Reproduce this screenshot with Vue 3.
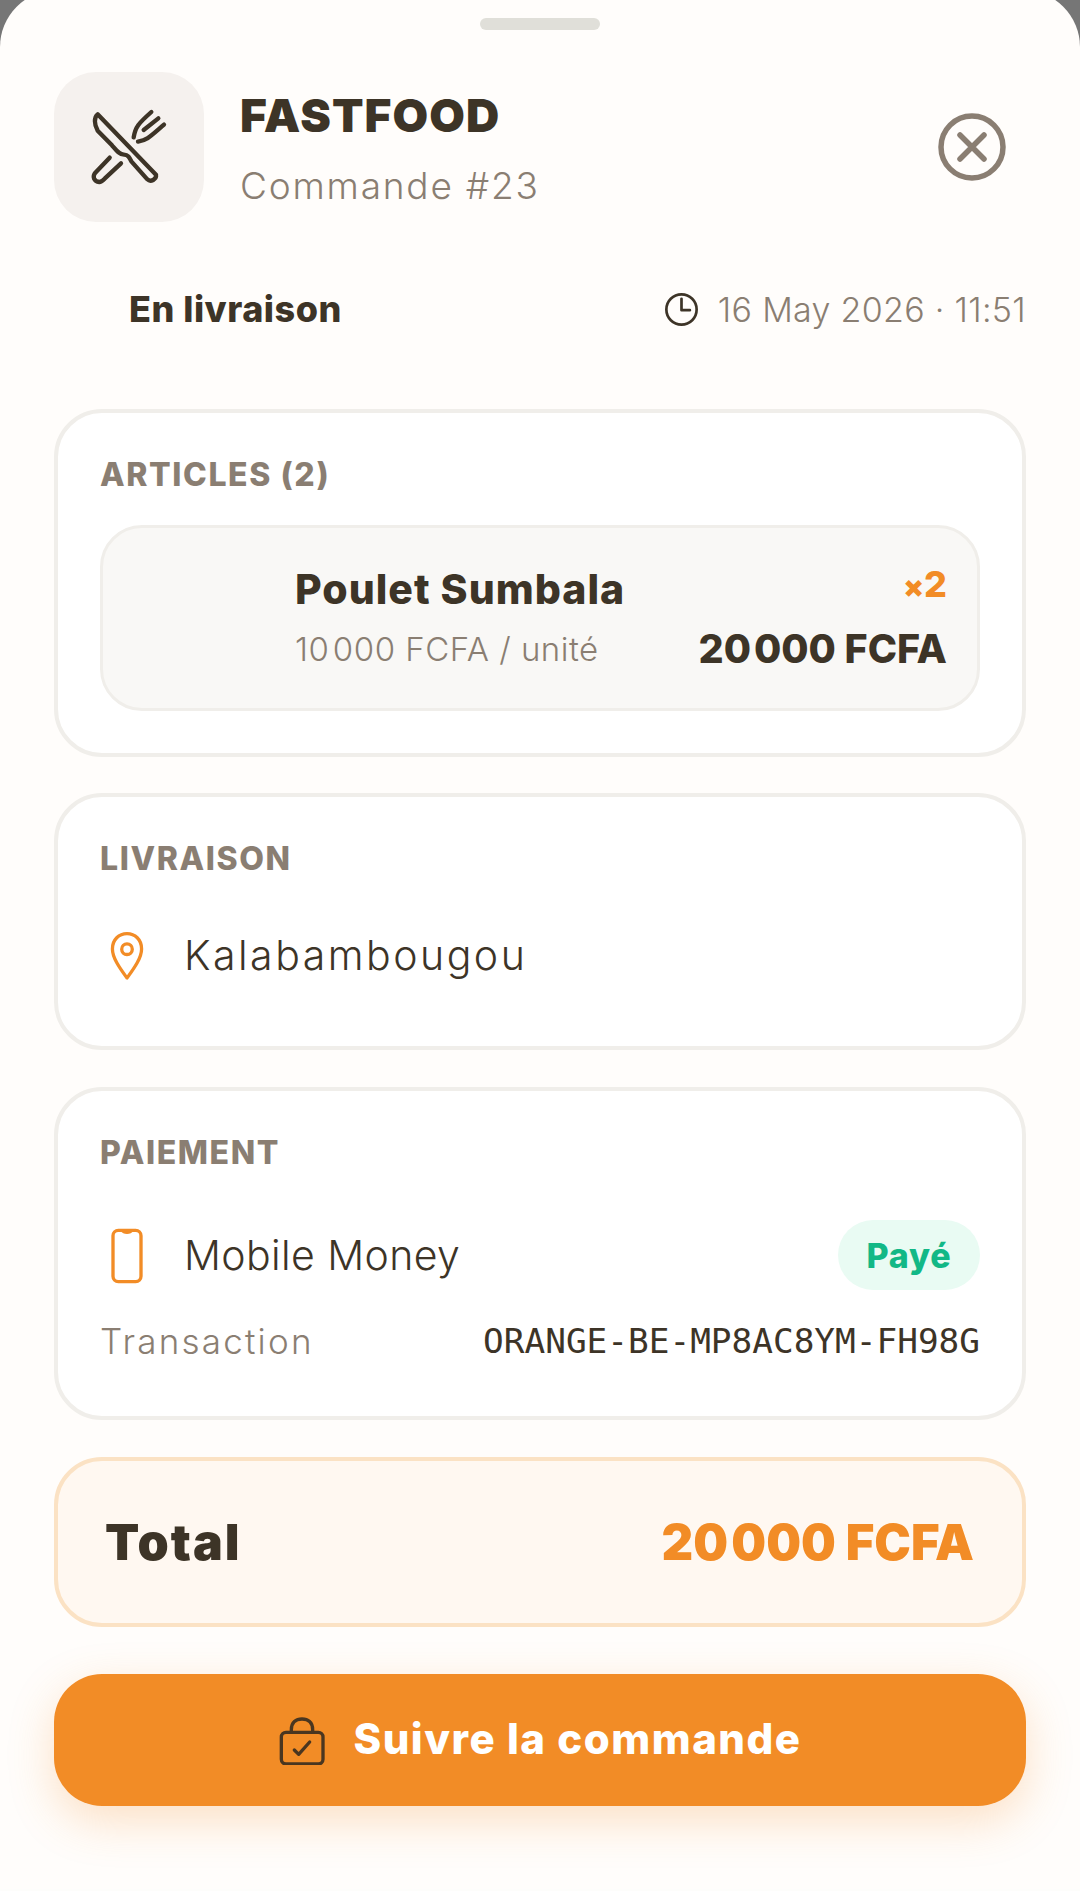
<script setup>
const order = {
  shop: 'FASTFOOD',
  number: 23,
  status: 'En livraison',
  date: '16 May 2026 · 11:51',
  address: 'Kalabambougou',
  transaction: 'ORANGE-BE-MP8AC8YM-FH98G',
  total: '20\u200a000 FCFA',
  unitPrice: '10\u200a000 FCFA / unité',
}
</script>

<template>
  <div class="sheet">
    <div class="handle"></div>

    <header class="head">
      <div class="shop-icon">
        <svg width="80" height="80" viewBox="87 141 240 240" fill="none" stroke="#3d3427" stroke-width="13" stroke-linecap="round" stroke-linejoin="round">
          <path d="M113 163 C102 172 102 192 113 212 L156 256 C168 270 178 284 192 284 C204 284 208 292 214 304 L262 358 C272 368 290 358 288 344 Z" />
          <path d="M149 293 L106 338 C96 350 102 364 118 366 C124 366 128 362 134 356 L183 310" />
          <path d="M221 232 C226 200 236 190 274 156" />
          <path d="M251 210 L295 175" />
          <path d="M234 245 C262 240 268 232 312 194" />
        </svg>
      </div>
      <div class="head-text">
        <div class="shop-name">{{ order.shop }}</div>
        <div class="order-no">Commande #{{ order.number }}</div>
      </div>
      <svg class="close" width="68" height="68" viewBox="0 0 68 68" fill="none" stroke="#8a7e72" stroke-linecap="round">
        <circle cx="34" cy="34" r="31" stroke-width="5.5" />
        <path d="M22 22 L46 46 M46 22 L22 46" stroke-width="5.5" />
      </svg>
    </header>

    <div class="status-row">
      <span class="status">{{ order.status }}</span>
      <span class="date">
        <svg width="37" height="37" viewBox="40 35 110 110" fill="none" stroke="#3d3427" stroke-width="8" stroke-linecap="round" stroke-linejoin="round">
          <circle cx="95" cy="90" r="45" />
          <path d="M95 58 V92 H120" />
        </svg>
        {{ order.date }}
      </span>
    </div>

    <section class="card articles">
      <h3 class="label">ARTICLES (2)</h3>
      <div class="item">
        <div class="item-left">
          <div class="item-name">Poulet Sumbala</div>
          <div class="item-unit">{{ order.unitPrice }}</div>
        </div>
        <div class="item-right">
          <div class="item-qty"><span class="times">×</span>2</div>
          <div class="item-price">{{ order.total }}</div>
        </div>
      </div>
    </section>

    <section class="card delivery">
      <h3 class="label">LIVRAISON</h3>
      <div class="row">
        <svg class="row-icon" width="40" height="53" viewBox="50 30 120 160" fill="none" stroke="#f28c26" stroke-width="10" stroke-linecap="round" stroke-linejoin="round">
          <path d="M110 178 C90 150 66 118 66 90 C66 62 86 44 110 44 C134 44 154 62 154 90 C154 118 130 150 110 178 Z" />
          <circle cx="110" cy="91" r="16" />
        </svg>
        <span class="row-text address">{{ order.address }}</span>
      </div>
    </section>

    <section class="card payment">
      <h3 class="label">PAIEMENT</h3>
      <div class="row pay-row">
        <svg class="row-icon" width="40" height="60" viewBox="50 30 120 180" fill="none" stroke="#f28c26" stroke-width="10" stroke-linejoin="round">
          <rect x="68" y="46" width="84" height="154" rx="16" />
          <path d="M92 48 C96 60 124 60 128 48 Z" fill="#f28c26" stroke="none" />
        </svg>
        <span class="row-text method">Mobile Money</span>
        <span class="badge">Payé</span>
      </div>
      <div class="tx-row">
        <span class="tx-label">Transaction</span>
        <span class="tx-code">{{ order.transaction }}</span>
      </div>
    </section>

    <section class="total">
      <span class="total-label">Total</span>
      <span class="total-value">{{ order.total }}</span>
    </section>

    <button class="track" type="button">
      <svg width="50" height="50" viewBox="60 40 150 150" fill="none" stroke="#4a3620" stroke-width="10" stroke-linecap="round" stroke-linejoin="round">
        <rect x="70" y="92" width="125" height="95" rx="14" />
        <path d="M100 92 V84 C100 62 114 52 132 52 C150 52 164 62 164 84 V92" />
        <path d="M109 145 L122 158 L155 121" />
      </svg>
      <span class="track-text">Suivre la commande</span>
    </button>
  </div>
</template>

<style scoped>
.sheet {
  box-sizing: border-box;
  width: 1080px;
  height: 1899px;
  margin-top: -10px;
  padding: 28px 54px 0;
  background: #fffdfb;
  border-radius: 57px 57px 0 0;
  font-family: Inter, "Noto Sans", sans-serif;
  color: #3d3427;
  overflow: hidden;
}
.handle { width: 120px; height: 12px; margin: 0 auto; border-radius: 6px; background: #e0dfd9; }

.head { display: flex; align-items: center; margin-top: 42px; height: 150px; }
.shop-icon { width: 150px; height: 150px; flex: none; display: flex; align-items: center; justify-content: center; background: #f5f1ee; border-radius: 42px; }
.head-text { margin-left: 36px; flex: 1; }
.shop-name { font-size: 46px; line-height: 62px; font-weight: 900; letter-spacing: 1.1px; }
.order-no { margin-top: 16px; font-size: 37px; line-height: 48px; font-weight: 340; letter-spacing: 1.8px; color: #8a7e72; }
.close { margin-right: 20px; flex: none; }

.status-row { display: flex; align-items: center; justify-content: space-between; height: 60px; margin-top: 57px; padding-left: 75px; }
.status { font-size: 36px; font-weight: 800; letter-spacing: 0.5px; }
.date { display: flex; align-items: center; gap: 18px; font-size: 34px; font-weight: 300; letter-spacing: 0.3px; color: #8a7e72; }

.card { box-sizing: border-box; background: #fff; border: 4px solid #f0eeea; border-radius: 48px; padding: 43px 42px 0; }
.label { margin: 0; font-size: 32px; line-height: 38px; font-weight: 800; letter-spacing: 1.6px; color: #8a7e72; }

.articles { height: 348px; margin-top: 70px; }
.item { box-sizing: border-box; display: flex; justify-content: space-between; align-items: center; height: 186px; margin-top: 31px; padding: 0 30px 0 192px; background: #f9f8f6; border: 3px solid #f0eeea; border-radius: 42px; }
.item-name { margin-top: 2px; font-size: 41px; line-height: 60px; font-weight: 800; letter-spacing: 1px; }
.item-unit { font-size: 33px; line-height: 60px; font-weight: 300; letter-spacing: 0.5px; color: #8a7e72; }
.item-right { text-align: right; }
.item-qty { font-size: 36px; line-height: 54px; font-weight: 800; color: #f28c26; }
.times { font-size: 30px; font-weight: 900; }
.item-price { margin-top: 6px; font-size: 39.5px; line-height: 60px; font-weight: 800; }

.delivery { height: 257px; margin-top: 36px; }
.row { display: flex; align-items: center; margin-top: 47px; height: 60px; }
.row-icon { width: 40px; margin-left: 7px; flex: none; }
.row-text { margin-left: 37px; font-size: 41px; line-height: 60px; font-weight: 340; }
.address { letter-spacing: 2.5px; }
.method { letter-spacing: 0.4px; }

.payment { height: 333px; margin-top: 37px; }
.pay-row { margin-top: 48px; height: 70px; }
.badge { box-sizing: border-box; width: 142px; height: 70px; margin-left: auto; display: flex; align-items: center; justify-content: center; border-radius: 35px; background: #e9fbf3; color: #12b886; font-size: 34px; font-weight: 800; letter-spacing: 0.8px; }
.tx-row { display: flex; align-items: center; justify-content: space-between; height: 50px; margin-top: 26px; }
.tx-label { font-size: 35px; font-weight: 300; letter-spacing: 2.2px; color: #8a7e72; }
.tx-code { font-family: "DejaVu Sans Mono", monospace; font-size: 34.4px; }

.total { box-sizing: border-box; display: flex; align-items: center; justify-content: space-between; height: 170px; margin-top: 37px; padding: 0 48px 0 47px; background: #fff8f1; border: 4px solid #fbe2c4; border-radius: 48px; }
.total-label { font-size: 50px; font-weight: 900; letter-spacing: 2px; }
.total-value { font-size: 49px; font-weight: 900; color: #f28c26; }

.track { display: flex; align-items: center; justify-content: center; gap: 25px; width: 100%; height: 132px; margin-top: 47px; border: 0; border-radius: 48px; background: #f28c26; color: #fff; font-family: inherit; font-size: 42px; font-weight: 800; letter-spacing: 1.5px; box-shadow: 0 15px 45px rgba(242, 140, 38, 0.25); }
.track-text { margin-top: -4px; }
</style>

<style>
html, body { background: #fdfdfb; }
body { margin: 0; background: linear-gradient(#767676 0, #767676 70px, #f0f0ee 70px); }
</style>
